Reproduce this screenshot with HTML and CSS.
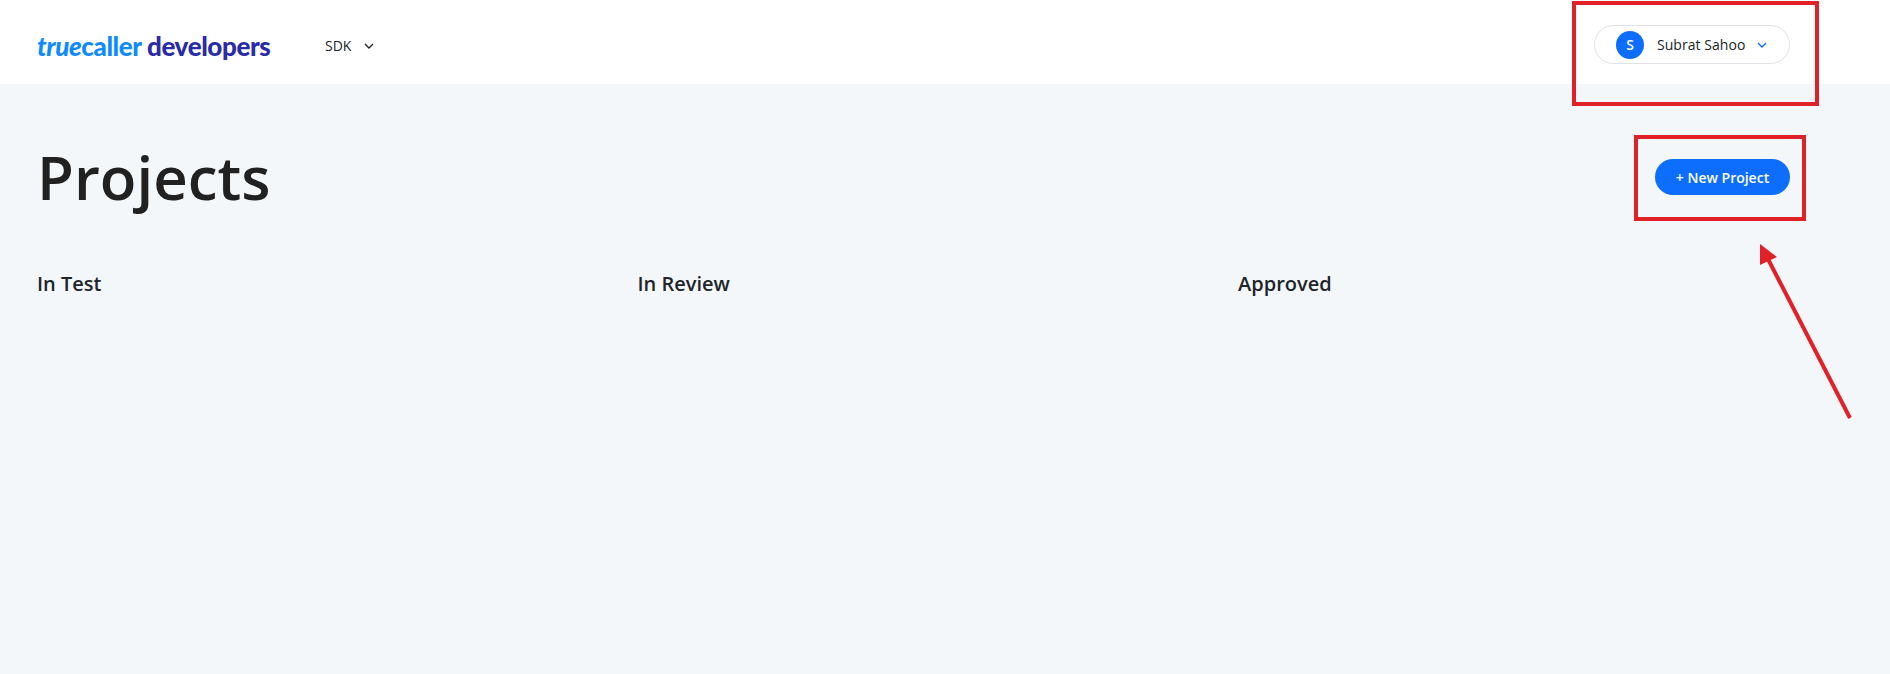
FILE: index.html
```html
<!DOCTYPE html>
<html lang="en">
<head>
<meta charset="UTF-8">
<meta name="viewport" content="width=device-width, initial-scale=1.0">
<title>Projects</title>
<link rel="stylesheet" href="styles.css">
</head>
<body>
<div class="header">
  <div class="logo"><span class="logo-true">true</span><span class="logo-caller">caller</span> <span class="logo-dev">developers</span></div>
  <div class="nav-item">SDK
    <svg class="chevron" width="10" height="6" viewBox="0 0 10 6"><path d="M1 1l4 4 4-4" fill="none" stroke="#212529" stroke-width="1.4"/></svg>
  </div>
  <div class="user-pill">
    <div class="avatar">S</div>
    <span class="user-name">Subrat Sahoo</span>
    <svg width="10" height="6" viewBox="0 0 10 6"><path d="M1 1l4 4 4-4" fill="none" stroke="#0d6efd" stroke-width="1.4"/></svg>
  </div>
</div>

<div class="content">
  <div class="title-row">
    <h1>Projects</h1>
    <button class="new-project">+ New Project</button>
  </div>
  <div class="columns">
    <h2>In Test</h2>
    <h2>In Review</h2>
    <h2>Approved</h2>
  </div>
</div>

<!-- annotations drawn over the screenshot -->
<div class="mark mark-user"></div>
<div class="mark mark-button"></div>
<svg class="arrow" width="110" height="190" viewBox="0 0 110 190">
  <path d="M100 184L18 25" stroke="#e02127" stroke-width="4" fill="none"/>
  <path d="M10 10L27 23L10 31Z" fill="#e02127"/>
</svg>
</body>
</html>
```
FILE: styles.css
```css
body {
  margin: 0;
  height: 674px;
  overflow: hidden;
  position: relative;
  background-color: #f4f7fa;
  font-family: "Open Sans", sans-serif;
  color: #212529;
}

.header {
  height: 84px;
  box-sizing: border-box;
  background-color: #fff;
  display: flex;
  align-items: center;
  padding: 7px 100px 0 37px;
}
.logo {
  width: 288px;
  font-family: "Lato", sans-serif;
  font-size: 26px;
  font-weight: 900;
  white-space: nowrap;
  letter-spacing: -0.4px;
}
.logo-true {
  color: #0f8bff;
  font-style: italic;
}
.logo-caller {
  color: #0f8bff;
}
.logo-dev {
  color: #2a2ba8;
}
.nav-item {
  font-size: 14px;
  font-weight: 500;
  display: flex;
  align-items: center;
  gap: 13px;
}
.user-pill {
  margin-left: auto;
  width: 196px;
  height: 39px;
  box-sizing: border-box;
  border: 1px solid #dfe2e6;
  border-radius: 20px;
  display: flex;
  align-items: center;
  padding-left: 21px;
  margin-top: -2px;
}
.avatar {
  width: 28px;
  height: 28px;
  border-radius: 50%;
  background-color: #0d6efd;
  color: #fff;
  font-size: 14px;
  font-weight: 600;
  display: flex;
  align-items: center;
  justify-content: center;
}
.user-name {
  font-size: 14px;
  margin: 0 12px 0 13px;
  letter-spacing: 0.05px;
}

.content {
  padding: 0 100px 0 37px;
}
.title-row {
  display: flex;
  justify-content: space-between;
  align-items: flex-start;
}
h1 {
  margin: 52px 0 0;
  font-size: 60px;
  font-weight: 600;
  line-height: 82px;
  color: #212121;
}
.new-project {
  margin-top: 75px;
  width: 135px;
  height: 36px;
  padding: 0;
  border: none;
  border-radius: 18px;
  background-color: #0d6efd;
  color: #fff;
  font-family: "Open Sans", sans-serif;
  font-size: 14px;
  font-weight: 600;
}
.columns {
  display: grid;
  grid-template-columns: repeat(3, 600.5px);
  margin-top: 52px;
}
h2 {
  margin: 0;
  font-size: 20px;
  font-weight: 600;
  line-height: 28px;
}

.mark {
  position: absolute;
  box-sizing: border-box;
  border: 4px solid #e02127;
}
.mark-user {
  left: 1572px;
  top: 1px;
  width: 247px;
  height: 105px;
}
.mark-button {
  left: 1634px;
  top: 135px;
  width: 172px;
  height: 86px;
}
.arrow {
  position: absolute;
  left: 1750px;
  top: 234px;
}
```
